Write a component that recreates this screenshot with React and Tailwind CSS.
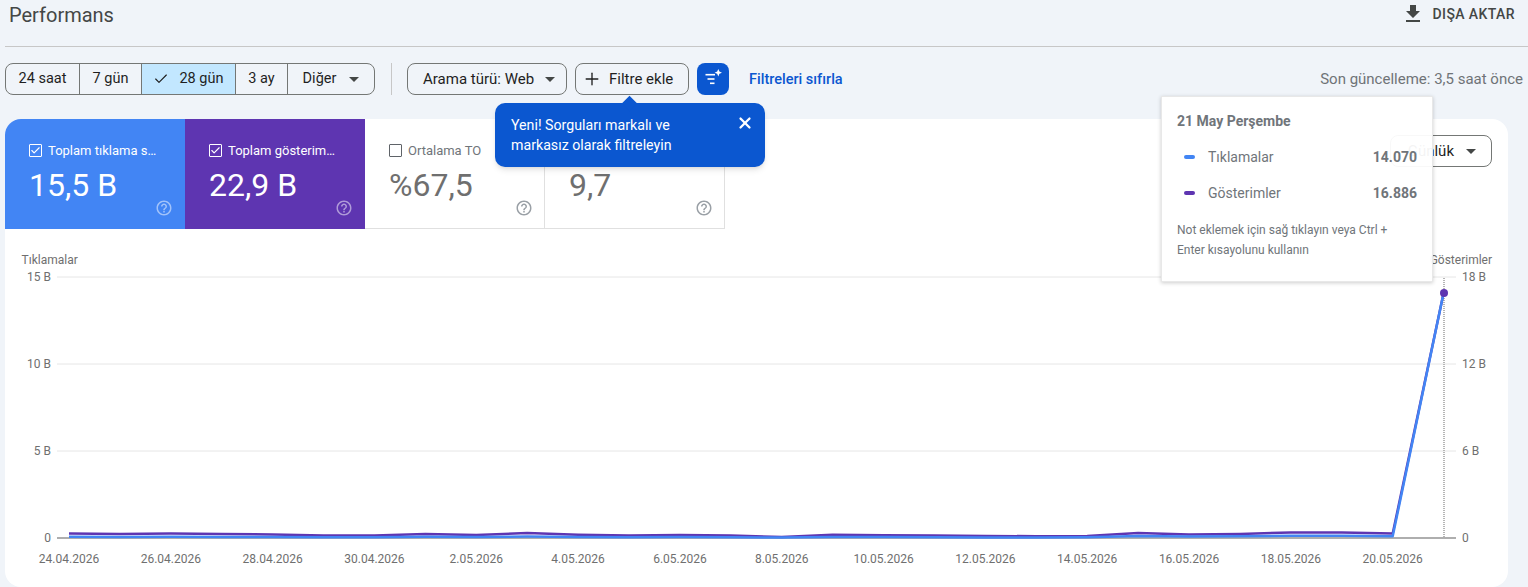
import { Check, Plus, X } from "lucide-react";

const font = { fontFamily: "Roboto, sans-serif" };

const ranges = [
  { label: "24 saat", w: "w-[73px]" },
  { label: "7 gün", w: "w-[62px]" },
  { label: "28 gün", w: "w-[94px]", active: true },
  { label: "3 ay", w: "w-[52px]" },
  { label: "Diğer", w: "w-[87px]", caret: true },
];

const metrics = [
  { title: "Toplam tıklama sayısı", value: "15,5 B", bg: "bg-[#4285f4]", on: true },
  { title: "Toplam gösterim sayısı", value: "22,9 B", bg: "bg-[#5e35b1]", on: true },
  { title: "Ortalama TO", value: "%67,5" },
  { title: "Ortalama konum", value: "9,7" },
];

// chart y values, in page pixels
const purple = [533.5, 534, 533.5, 534, 534.5, 535.5, 535.5, 534, 535, 533, 534.8, 535.5, 535, 535.5, 537, 534.7, 535.3, 535.5, 536, 536.2, 536, 533, 534.5, 534, 532.5, 532.5, 533.5, 293];
const blue = [536.8, 537, 536.8, 537, 537, 537.2, 537.2, 536.8, 537, 536.5, 537, 537.2, 537, 537.2, 537.6, 537, 537, 537.2, 537.4, 537.5, 537.3, 536, 536.5, 536.3, 535.8, 535.8, 536.3, 293];
const xs = purple.map((_, i) => 69 + i * 50.91);
const toPoints = (ys) => ys.map((y, i) => `${xs[i].toFixed(1)},${y}`).join(" ");

const dates = ["24.04.2026", "26.04.2026", "28.04.2026", "30.04.2026", "2.05.2026", "4.05.2026", "6.05.2026", "8.05.2026", "10.05.2026", "12.05.2026", "14.05.2026", "16.05.2026", "18.05.2026", "20.05.2026"];

function Caret() {
  return <span className="w-0 h-0 border-x-[5px] border-x-transparent border-t-[5px] border-t-[#444746]" />;
}

function HelpIcon({ className }) {
  return (
    <svg width="18" height="18" viewBox="0 0 24 24" className={className} fill="currentColor">
      <path d="M11 18h2v-2h-2v2zm1-16C6.48 2 2 6.48 2 12s4.48 10 10 10 10-4.48 10-10S17.52 2 12 2zm0 18c-4.41 0-8-3.59-8-8s3.59-8 8-8 8 3.59 8 8-3.59 8-8 8zm0-14c-2.21 0-4 1.79-4 4h2c0-1.1.9-2 2-2s2 .9 2 2c0 2-3 1.75-3 5h2c0-2.25 3-2.5 3-5 0-2.21-1.79-4-4-4z" />
    </svg>
  );
}

function MetricTile({ m }) {
  return (
    <div className={`relative w-[180px] h-[110px] pl-[24px] pt-[24px] ${m.on ? `${m.bg} text-white` : "bg-white text-[#5f6368] border-r border-b border-[#e0e0e0]"}`}>
      <div className="flex items-center gap-[6px] h-[15px]">
        <span className={`w-[13px] h-[13px] shrink-0 rounded-[1px] border flex items-center justify-center ${m.on ? "border-white" : "border-[#5f6368]"}`}>
          {m.on && <Check size={11} strokeWidth={2.5} className="text-white" />}
        </span>
        <span className={`w-[110px] truncate text-[13px] leading-[15px] ${m.on ? "" : "text-[#70757a]"}`}>{m.title}</span>
      </div>
      <div className={`mt-[8px] text-[32px] leading-[38px] ${m.on ? "" : "text-[#6f6f6f]"}`}>{m.value}</div>
      <HelpIcon className={`absolute ${m.on ? "right-[12px] bottom-[12px] text-white/50" : "right-[11px] bottom-[11px] text-[#9aa0a6]"}`} />
    </div>
  );
}

function Chart() {
  const label = { fontSize: 12, fill: "#6f6f6f", fontFamily: "Roboto, sans-serif" };
  return (
    <svg width="1503" height="358" viewBox="5 229 1503 358" className="block">
      <text x="21.5" y="264" style={label}>Tıklamalar</text>
      <text x="1492" y="264" textAnchor="end" style={label}>Gösterimler</text>
      {[277, 364, 451].map((y) => (
        <line key={y} x1="57" x2="1456" y1={y} y2={y} stroke="#e6e6e6" />
      ))}
      <line x1="57" x2="1456" y1="538" y2="538" stroke="#aeaeae" strokeWidth="2" />
      {[["15 B", 277], ["10 B", 364], ["5 B", 451], ["0", 538]].map(([t, y]) => (
        <text key={t} x="51" y={y + 4} textAnchor="end" style={label}>{t}</text>
      ))}
      {[["18 B", 277], ["12 B", 364], ["6 B", 451], ["0", 538]].map(([t, y]) => (
        <text key={t} x="1462" y={y + 4} style={label}>{t}</text>
      ))}
      {dates.map((d, i) => (
        <text key={d} x={xs[i * 2]} y="563" textAnchor="middle" style={label}>{d}</text>
      ))}
      <line x1="1444" x2="1444" y1="278" y2="538" stroke="#b5b5b5" strokeWidth="2" strokeDasharray="1 1" />
      <polyline points={toPoints(purple)} fill="none" stroke="#5e35b1" strokeWidth="2.5" strokeLinejoin="round" />
      <polyline points={toPoints(blue)} fill="none" stroke="#4285f4" strokeWidth="2.5" strokeLinejoin="round" />
      <circle cx="1444" cy="293" r="4" fill="#5e35b1" />
    </svg>
  );
}

export default function App() {
  return (
    <div style={font} className="relative w-[1528px] h-[587px] overflow-hidden bg-[#f0f4f9] pl-[5px]">
      <header className="h-[47px] flex items-start justify-between border-b border-[#c7c7c7] pl-[4px] pr-[13px]">
        <h1 className="text-[20px] leading-[30px] text-[#444746]">Performans</h1>
        <button className="h-[28px] flex items-center gap-[8px] text-[14px] font-medium tracking-[0.4px] text-[#444746]">
          <svg width="24" height="24" viewBox="0 0 24 24" fill="currentColor"><path d="M19 9h-4V3H9v6H5l7 7 7-7zM5 18v2h14v-2H5z" /></svg>
          DIŞA AKTAR
        </button>
      </header>

      <div className="mt-[16px] h-[32px] flex items-center text-[15px] text-[#1f1f1f]">
        <div className="flex h-[32px] text-[14.5px] rounded-[8px] border border-[#747775] overflow-hidden">
          {ranges.map((r, i) => (
            <div key={r.label} className={`${r.w} flex items-center justify-center gap-[10px] ${i > 0 ? "border-l border-[#747775]" : ""} ${r.active ? "bg-[#c2e7ff]" : ""}`}>
              {r.active && <Check size={16} strokeWidth={1.75} />}
              <span>{r.label}</span>
              {r.caret && <span className="ml-[3px] flex"><Caret /></span>}
            </div>
          ))}
        </div>
        <div className="ml-[16px] mr-[15px] w-px h-[32px] bg-[#c7c7c7]" />
        <div className="w-[160px] h-[32px] mr-[8px] flex items-center justify-between pl-[15px] pr-[11px] rounded-[8px] border border-[#747775]">
          Arama türü: Web <Caret />
        </div>
        <div className="w-[114px] h-[32px] mr-[8px] flex items-center gap-[7px] pl-[6px] rounded-[8px] border border-[#747775]">
          <Plus size={20} strokeWidth={1.6} /> Filtre ekle
        </div>
        <button className="w-[32px] h-[32px] rounded-[8px] bg-[#0b57d0] flex items-center justify-center">
          <svg width="20" height="20" viewBox="0 0 20 20" fill="white">
            <rect x="2.5" y="4.9" width="9.5" height="1.6" />
            <rect x="4.5" y="9.2" width="7" height="1.6" />
            <rect x="7" y="13.5" width="4.5" height="1.6" />
            <path d="M15.3 0l1.1 2.6 2.6 1.1-2.6 1.1-1.1 2.6-1.1-2.6-2.6-1.1 2.6-1.1z" />
          </svg>
        </button>
        <span className="ml-[20px] mt-[1px] text-[#0b57d0] font-medium text-[14.5px]">Filtreleri sıfırla</span>
        <span className="ml-auto mr-[5px] text-[#6f7377]">Son güncelleme: 3,5 saat önce</span>
      </div>

      <section className="mt-[24px] w-[1503px] h-[468px] rounded-[16px] bg-white overflow-hidden">
        <div className="flex justify-between pr-[16px]">
          <div className="flex">
            {metrics.map((m) => <MetricTile key={m.title} m={m} />)}
          </div>
          <div className="mt-[16px] w-[102px] h-[32px] flex items-center justify-end gap-[12px] pr-[15px] rounded-[8px] border border-[#747775] text-[15px] text-[#1f1f1f]">
            Günlük <Caret />
          </div>
        </div>
        <Chart />
      </section>

      {/* callout over the tiles */}
      <div className="absolute left-[495px] top-[103px] w-[270px] h-[64px] rounded-[10px] bg-[#0b57d0] text-white text-[14.2px] leading-[20px] pl-[16px] pt-[12px] shadow-md">
        <span className="absolute left-[129px] -top-[5px] w-[11px] h-[11px] rotate-45 bg-[#0b57d0]" />
        Yeni! Sorguları markalı ve<br />markasız olarak filtreleyin
        <X size={18} strokeWidth={3} className="absolute right-[11px] top-[11px]" />
      </div>

      {/* hover card for the last point */}
      <div className="absolute left-[1161px] top-[96px] w-[272px] h-[186px] bg-white/95 border border-[#e8e8e8] shadow-[0_1px_4px_rgba(0,0,0,0.2)] px-[15px] pt-[15px] text-[#70757a]">
        <div className="text-[14px] leading-[18px] font-bold">21 May Perşembe</div>
        <div className="mt-[18px] h-[18px] flex items-center text-[14px]">
          <span className="ml-[7px] w-[11px] h-[4px] rounded-full bg-[#4285f4]" />
          <span className="ml-[13px]">Tıklamalar</span>
          <span className="ml-auto font-bold">14.070</span>
        </div>
        <div className="mt-[18px] h-[18px] flex items-center text-[14px]">
          <span className="ml-[7px] w-[11px] h-[4px] rounded-full bg-[#5e35b1]" />
          <span className="ml-[13px]">Gösterimler</span>
          <span className="ml-auto font-bold">16.886</span>
        </div>
        <div className="mt-[18px] text-[12px] leading-[20px]">Not eklemek için sağ tıklayın veya Ctrl +<br />Enter kısayolunu kullanın</div>
      </div>
    </div>
  );
}
